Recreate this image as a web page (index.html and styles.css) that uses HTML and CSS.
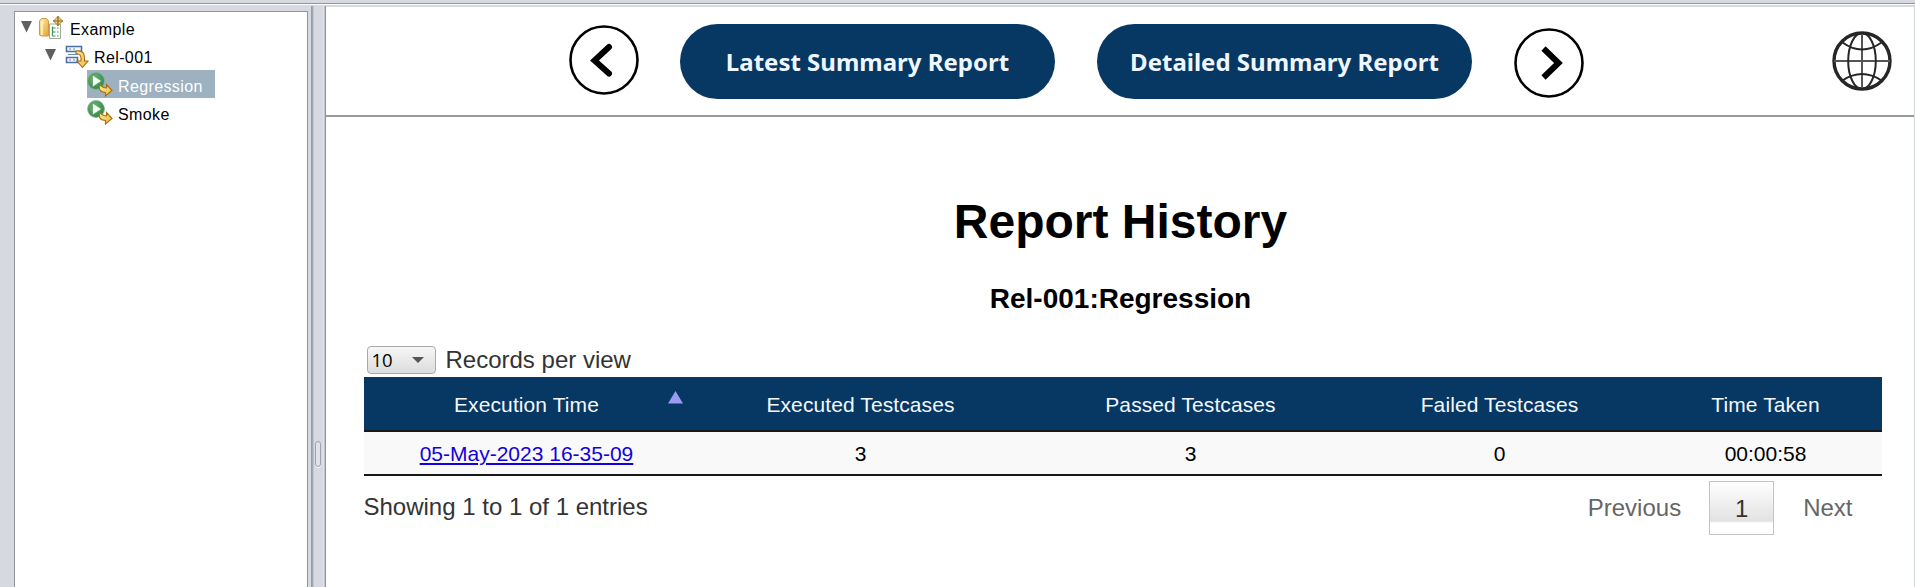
FILE: index.html
```
<!DOCTYPE html>
<html lang="en">
<head>
<meta charset="utf-8">
<title>Report History</title>
<link rel="stylesheet" href="styles.css">
</head>
<body>
<svg class="defs" width="0" height="0">
  <linearGradient id="gold" x1="0" y1="0" x2="1" y2="1"><stop offset="0" stop-color="#fff0b8"/><stop offset="1" stop-color="#e3a424"/></linearGradient>
  <linearGradient id="arrow" x1="0" y1="0" x2="1" y2="1"><stop offset="0" stop-color="#ffeb9c"/><stop offset="1" stop-color="#f0b93a"/></linearGradient>
  <radialGradient id="green" cx=".4" cy=".35" r=".7"><stop offset="0" stop-color="#6db87a"/><stop offset="1" stop-color="#2b8445"/></radialGradient>
  <symbol id="run" viewBox="0 0 26 26">
    <circle cx="9" cy="9" r="8.400" fill="url(#green)" stroke="#7fb389" stroke-width=".8"/>
    <path d="M5.500 3v12l9-6z" fill="#f4fff2" stroke="#4c8f58" stroke-width=".6"/>
    <path d="M13 13c-2 3-.5 7 5.500 7.500V24l6.500-5.500-5.500-6V16c-3 0-4-.8-6.500-3z" fill="url(#arrow)" stroke="#a87318" stroke-width="1.200"/>
  </symbol>
</svg>
<div class="topbar"></div>
<div class="workspace">
  <aside class="tree">
    <div class="node root">
      <svg class="twisty" viewBox="0 0 11 12"><path d="M0 0h11L5.500 11.500z"/></svg>
      <svg class="ico" viewBox="0 0 26 26">
        <path d="M1.500 19V5l2-2.500h5L10.500 5v15h-7z" fill="url(#gold)" stroke="#c99a48"/>
        <path d="M4 19V6.500h2" fill="none" stroke="#fff2c4" stroke-width="1.500"/>
        <path d="M11.500 8h11v14.500h-11z" fill="#fbfdff" stroke="#a7a99a"/>
        <path d="M14.500 10.500v9.500M14.500 12h3m-3 4h3m-3 4h3M19 12h1.500M19 16h1.500M19 20h1.500" fill="none" stroke="#3f9460" stroke-width="1.200"/>
        <path d="M20 .5L24.500 5 20 9.500 15.500 5z" fill="#f3d27c" stroke="#a57c2c"/>
        <path d="M20 0v10M15 5h10" stroke="#8a651c" stroke-width="1.200"/>
      </svg>
      <span>Example</span>
    </div>
    <div class="node release">
      <svg class="twisty" viewBox="0 0 11 12"><path d="M0 0h11L5.500 11.500z"/></svg>
      <svg class="ico" viewBox="0 0 26 26">
        <path d="M1.500 2.500h15v5h-15zM1.500 13.500h11v5h-11z" fill="#f4f8ff" stroke="#4d6fa5" stroke-width="1.600"/>
        <path d="M4 5h2m2 0h2M4 16h2m2 0h2M3 10.500h10" stroke="#6d8bb8" stroke-width="1.200"/>
        <path d="M11 7c7-1 9 2.500 8.500 10H23l-5.500 6.500L12 17h4c.5-5-.5-7-5-7.500z" fill="url(#arrow)" stroke="#a66c10" stroke-width="1.100"/>
      </svg>
      <span>Rel-001</span>
    </div>
    <div class="node leaf selected"><svg class="ico"><use href="#run"/></svg><span>Regression</span></div>
    <div class="node leaf"><svg class="ico"><use href="#run"/></svg><span>Smoke</span></div>
  </aside>
  <div class="splitter"><i class="grip"></i></div>
  <main class="content">
    <header class="nav">
      <svg class="circle prev" viewBox="0 0 70 70"><circle cx="35" cy="35" r="33.500"/><path class="round" d="M40 22L25.500 35.500 40 48.500"/></svg>
      <a class="pill latest"><span>Latest Summary Report</span></a>
      <a class="pill detailed"><span>Detailed Summary Report</span></a>
      <svg class="circle next" viewBox="0 0 70 70"><circle cx="35" cy="35" r="33.500"/><path d="M29.500 20.500L44.500 35 29.500 49.500"/></svg>
      <svg class="globe" viewBox="0 0 60 60">
        <circle cx="30" cy="30" r="28" stroke-width="3.400"/>
        <path d="M30 2v56M2 30h56" stroke="#555" stroke-width="2"/>
        <ellipse cx="30" cy="30" rx="13.800" ry="28" stroke-width="2"/>
        <path d="M10.500 11.500q19.500 14 39 0M10.500 49.500q19.500-13 39 0" stroke-width="2"/>
      </svg>
    </header>
    <h1>Report History</h1>
    <h2>Rel-001:Regression</h2>
    <section class="report">
      <div class="length"><div class="select"><span>10</span><i class="arrow"></i></div><span>Records per view</span></div>
      <table>
        <colgroup><col class="c1"><col class="c2"><col class="c3"><col class="c4"><col></colgroup>
        <thead><tr><th><div class="sorted">Execution Time<svg class="sort" viewBox="0 0 15 13"><path d="M7.500 0L15 12.500H0z"/></svg></div></th><th>Executed Testcases</th><th>Passed Testcases</th><th>Failed Testcases</th><th>Time Taken</th></tr></thead>
        <tbody><tr><td><a href="#">05-May-2023 16-35-09</a></td><td>3</td><td>3</td><td>0</td><td>00:00:58</td></tr></tbody>
      </table>
      <footer class="foot">
        <span class="info">Showing 1 to 1 of 1 entries</span>
        <div class="pager"><span>Previous</span><b>1</b><span>Next</span></div>
      </footer>
    </section>
  </main>
</div>
</body>
</html>
```
FILE: styles.css
```
* { box-sizing: border-box; }
body {
  margin: 0;
  height: 587px;
  overflow: hidden;
  display: flex;
  flex-direction: column;
  background: #d6d9df;
  font-family: "Liberation Sans", Arial, sans-serif;
  color: #000;
}
.defs { position: absolute; }
.topbar {
  height: 5px;
  flex: none;
  border-bottom: 1px solid #fff;
  box-shadow: inset 0 -1px #8e95a3;
}
.workspace { flex: 1; display: flex; padding: 2px 1px 0 14px; min-height: 0; }

.tree {
  width: 294px;
  margin-top: 4px;
  padding-top: 2px;
  background: #fff;
  border: 1px solid #8f949f;
  border-bottom: 0;
  font-size: 16px;
}
.node { display: flex; height: 28px; align-items: flex-start; letter-spacing: .38px; }
.node span { line-height: 18px; margin-top: 7px; }
.root { padding-left: 6px; }
.root .ico { margin: 2px 6px 0 6px; }
.release { padding-left: 30px; }
.release .ico { margin: 2px 3px 0 9px; }
.leaf { margin-left: 72px; width: 128px; }
.leaf .ico { margin: 2px 5px 0 0; }
.leaf span { margin-top: 8px; }
.selected { background: #9db1c0; color: #fff; }
.ico { width: 26px; height: 26px; flex: none; }
.twisty { width: 11px; height: 12px; margin-top: 7px; fill: #5f5f5f; flex: none; }

.splitter {
  width: 18px;
  display: flex;
  align-items: center;
  padding-left: 7px;
  margin-top: -1px;
  background: linear-gradient(90deg, #d6d9df 3px, #9298a4 3px, #a9aebb 5px, #d6d9df 6px, #d6d9df 15px, #f0f1f4 16px, #8f949f 17px);
}
.grip {
  width: 6px;
  height: 26px;
  margin-top: 315px;
  border: 1px solid #9da2ad;
  border-radius: 3px;
  background: #dfe2e8;
  box-shadow: 0 1px #f5f6f8;
}

.content { flex: 1; background: #fff; display: flex; flex-direction: column; }
.nav {
  height: 110px;
  flex: none;
  display: flex;
  padding: 17px 22px 0 243px;
  border-bottom: 2px solid #999;
}
.circle { width: 70px; height: 70px; fill: none; stroke: #000; stroke-width: 2.600; flex: none; }
.circle path { stroke-width: 6; }
.circle .round { stroke-linecap: round; }
.prev { margin-top: 1px; }
.next { margin: 4px 0 0 41.500px; }
.pill {
  width: 375px;
  height: 75px;
  flex: none;
  border-radius: 37.500px;
  background: #073763;
  color: #eef6ff;
  font: bold 24px/76px "Noto Sans", "Open Sans", sans-serif;
  text-align: center;
  white-space: nowrap;
}
.latest { margin-left: 41px; }
.detailed { margin-left: 42px; }
.globe { width: 60px; height: 60px; margin: 7px 0 0 auto; fill: none; stroke: #262626; }

h1 { margin: 77px 0 0; font-size: 48px; line-height: 56px; text-align: center; }
h2 { margin: 33px 0 0; font-size: 28px; line-height: 32px; text-align: center; }
h1, h2 { width: 1588px; padding-left: 1px; }
.report { margin: 31px 32px 0 37.500px; }
.length { display: flex; height: 31px; color: #333; font-size: 24px; line-height: 28px; }
.select {
  display: flex;
  justify-content: space-between;
  align-items: center;
  width: 69px;
  height: 28px;
  margin: 0 10px 0 3px;
  padding: 0 11px 0 4px;
  border: 1px solid #aaa;
  border-radius: 4px;
  background: linear-gradient(#f7f7f7, #dcdcdc);
  color: #000;
  font-family: "Open Sans", "Noto Sans", sans-serif;
  font-size: 18.500px;
}
.arrow { border: 6px solid transparent; border-top-color: #555; border-bottom: 0; }
table { width: 1518px; table-layout: fixed; border-collapse: collapse; font-size: 21px; }
.c1 { width: 326px; }
.c2 { width: 342px; }
.c3 { width: 318px; }
.c4 { width: 300px; }
th {
  height: 54px;
  padding: 2px 0 0;
  background: #073763;
  color: #f4f8fc;
  font-weight: normal;
  letter-spacing: .1px;
  border-bottom: 2px solid #16181c;
}
td {
  height: 44px;
  padding: 2px 0 0;
  text-align: center;
  background: #f9f9f9;
  border-bottom: 2px solid #16181c;
}
td a { color: #1200e0; }
.sorted { position: relative; }
.sort { position: absolute; right: 7px; top: -2px; width: 15px; height: 13px; fill: #9a9cf4; }
.foot { display: flex; justify-content: space-between; color: #333; font-size: 24px; }
.info { margin-top: 17px; line-height: 28px; }
.pager { display: flex; margin: 5px 29.500px 0 0; align-items: flex-start; line-height: 54px; color: #666; }
.pager b {
  width: 65px;
  height: 54px;
  margin: 0 29px 0 28px;
  border: 1px solid #c4c4c4;
  background: linear-gradient(#fff, #e2e2e2 39px, #fff 41px);
  color: #333;
  font-weight: normal;
  text-align: center;
}
```
